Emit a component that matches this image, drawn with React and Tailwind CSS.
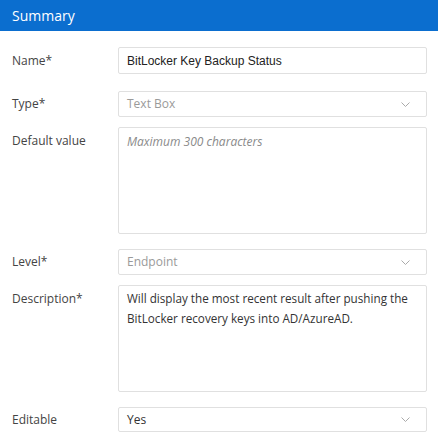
import React from "react";

const Chevron = () => (
  <svg width="9" height="5" viewBox="0 0 9 5" className="shrink-0">
    <path d="M0.5 0.5 L4.5 4.5 L8.5 0.5" fill="none" stroke="#aaaaaa" strokeWidth="1" />
  </svg>
);

const Label = ({ children, top }) => (
  <div className={`w-[118px] shrink-0 pl-3 text-[12px] text-[#444] ${top ? "pt-[5px]" : "self-center"}`}>
    {children}
  </div>
);

const Select = ({ value, muted, h }) => (
  <div className={`flex-1 ${h} flex items-center justify-between rounded-[2px] border border-[#e0e0e0] bg-white pl-2 pr-[16px] text-[12px] ${muted ? "text-[#9a9a9a]" : "text-[#333]"}`}>
    <span>{value}</span>
    <Chevron />
  </div>
);

export default function App() {
  return (
    <div className="w-[438px] h-[447px] bg-white overflow-hidden" style={{ fontFamily: '"Open Sans", "Noto Sans", sans-serif' }}>
      <div className="h-[31px] bg-[#0b6ecf] flex items-center pl-3 text-[14px] text-white">Summary</div>
      <div className="pr-[11px] pt-4">
        <div className="flex">
          <Label>Name*</Label>
          <div className="flex-1 h-[27px] flex items-center rounded-[2px] border border-[#e0e0e0] pl-2 text-[12px] text-[#222]" style={{ fontFamily: '"Liberation Sans", Arial, sans-serif' }}>
            BitLocker Key Backup Status
          </div>
        </div>
        <div className="flex mt-[17px]">
          <Label>Type*</Label>
          <Select value="Text Box" muted h="h-[26px]" />
        </div>
        <div className="flex mt-[10px]">
          <Label top>Default value</Label>
          <div className="flex-1 h-[107px] rounded-[2px] border border-[#e0e0e0] px-2 pt-[5px] text-[12px] italic text-[#8a8a8a]">
            Maximum 300 characters
          </div>
        </div>
        <div className="flex mt-[15px]">
          <Label>Level*</Label>
          <Select value="Endpoint" muted h="h-[26px]" />
        </div>
        <div className="flex mt-[10px]">
          <Label top>Description*</Label>
          <div className="flex-1 h-[107px] rounded-[2px] border border-[#e0e0e0] px-2 pt-[2px] text-[11.7px] leading-[20px] text-[#333]">
            Will display the most recent result after pushing the BitLocker recovery keys into AD/AzureAD.
          </div>
        </div>
        <div className="flex mt-[15px]">
          <Label>Editable</Label>
          <Select value="Yes" h="h-[25px]" />
        </div>
      </div>
    </div>
  );
}
